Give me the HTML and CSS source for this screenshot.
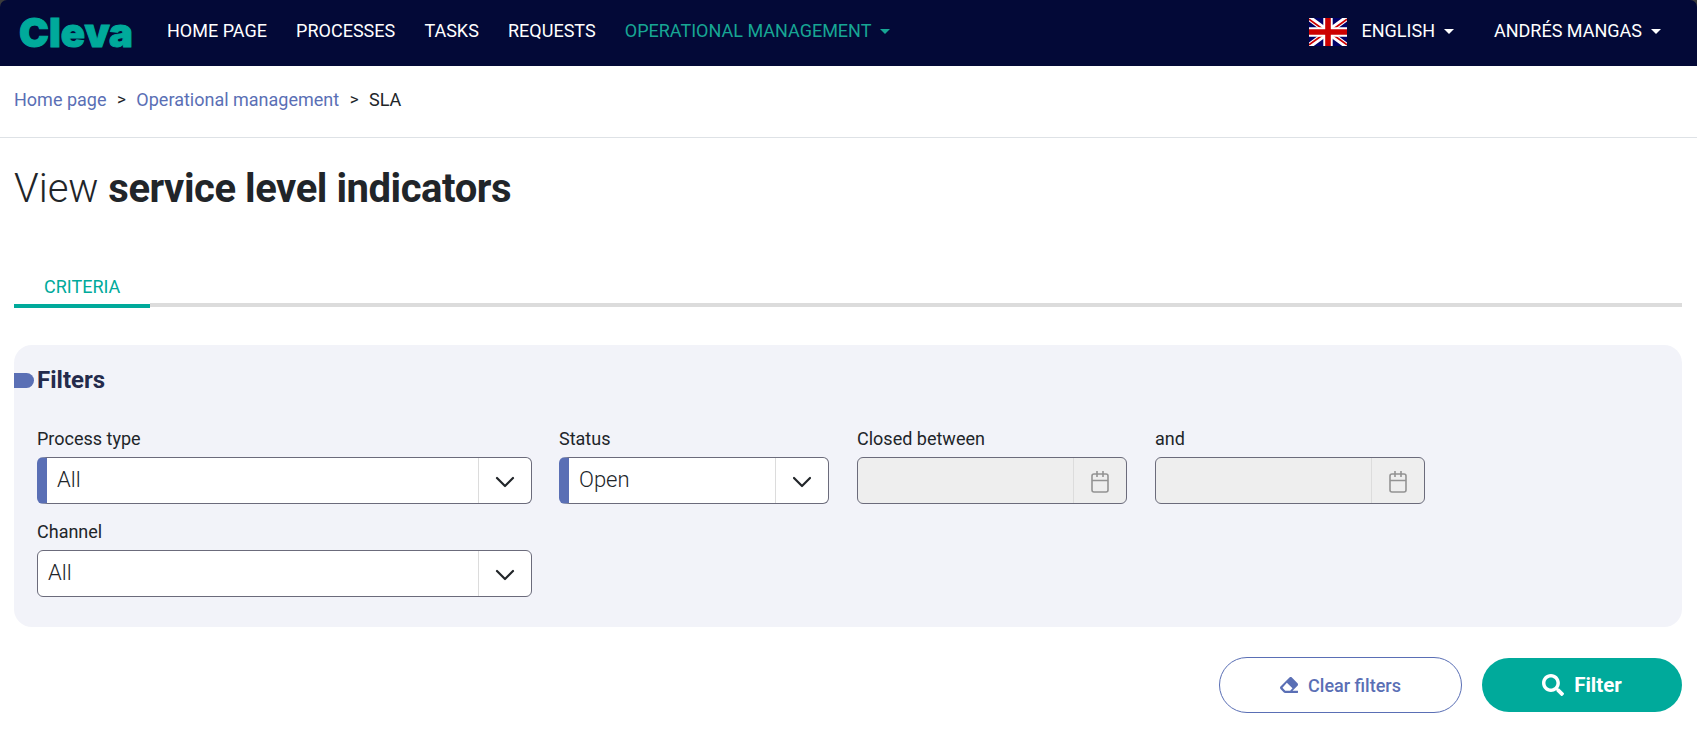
FILE: index.html
```html
<!DOCTYPE html>
<html lang="en">
<head>
<meta charset="utf-8">
<title>Cleva - SLA</title>
<link rel="stylesheet" href="styles.css">
</head>
<body>
<div class="backdrop">
<header class="navbar">
  <svg class="logo" width="113" height="34" viewBox="0 0 113 34" role="img" aria-label="Cleva"><text class="logo-text" x="0" y="31" textLength="114" lengthAdjust="spacingAndGlyphs">Cleva</text></svg>
  <nav class="menu">
    <a class="menu-item">HOME PAGE</a>
    <a class="menu-item">PROCESSES</a>
    <a class="menu-item">TASKS</a>
    <a class="menu-item">REQUESTS</a>
    <a class="menu-item active">OPERATIONAL MANAGEMENT<i class="caret"></i></a>
  </nav>
  <div class="account">
    <svg class="flag" width="38" height="28" viewBox="0 0 38 28">
      <rect width="38" height="28" fill="#006"/>
      <path d="M0 0 38 28M38 0 0 28" stroke="#fff" stroke-width="5.6"/>
      <path d="M0 1.2 15 12M38 26.800 23 16M38 1.200 23 12M0 26.800 15 16" stroke="#c00" stroke-width="1.700"/>
      <path d="M19 0V28M0 14H38" stroke="#fff" stroke-width="9.400"/>
      <path d="M19 0V28M0 14H38" stroke="#c00" stroke-width="5.600"/>
    </svg>
    <a class="menu-item language">ENGLISH<i class="caret"></i></a>
    <a class="menu-item user">ANDRÉS MANGAS<i class="caret"></i></a>
  </div>
</header>
</div>
<div class="breadcrumb"><a>Home page</a><span class="sep">&gt;</span><a>Operational management</a><span class="sep">&gt;</span><span>SLA</span></div>
<main class="page">
  <h1 class="title">View <b>service level indicators</b></h1>
  <div class="tabs"><div class="tab">CRITERIA</div><div class="tab-rest"></div></div>
  <section class="filters">
    <h2 class="filters-title"><i class="marker"></i>Filters</h2>
    <div class="fields">
      <div class="field wide">
        <label>Process type</label>
        <div class="control changed"><span class="value">All</span><span class="addon"><svg width="20" height="12" viewBox="0 0 20 12"><path class="chevron" d="M2 2 10 10 18 2"/></svg></span></div>
      </div>
      <div class="field">
        <label>Status</label>
        <div class="control changed"><span class="value">Open</span><span class="addon"><svg width="20" height="12" viewBox="0 0 20 12"><path class="chevron" d="M2 2 10 10 18 2"/></svg></span></div>
      </div>
      <div class="field">
        <label>Closed between</label>
        <div class="control disabled"><span class="value"></span><span class="addon"><svg class="calendar" width="20" height="24" viewBox="0 0 20 24"><rect x="2" y="4" width="16" height="18" rx="2"/><path d="M2 10.500H18M7 1V7M13 1V7"/></svg></span></div>
      </div>
      <div class="field">
        <label>and</label>
        <div class="control disabled"><span class="value"></span><span class="addon"><svg class="calendar" width="20" height="24" viewBox="0 0 20 24"><rect x="2" y="4" width="16" height="18" rx="2"/><path d="M2 10.500H18M7 1V7M13 1V7"/></svg></span></div>
      </div>
    </div>
    <div class="fields">
      <div class="field wide">
        <label>Channel</label>
        <div class="control"><span class="value">All</span><span class="addon"><svg width="20" height="12" viewBox="0 0 20 12"><path class="chevron" d="M2 2 10 10 18 2"/></svg></span></div>
      </div>
    </div>
  </section>
  <div class="actions">
    <button class="button clear"><svg width="18" height="18" viewBox="0 0 512 512"><path fill="currentColor" d="M497.900 273.900c18.800-18.700 18.800-49.100 0-67.900l-160-160c-18.800-18.700-49.100-18.800-67.900 0l-256 256c-18.700 18.700-18.700 49.100 0 67.900l96 96A48 48 0 0 0 144 480h356c6.600 0 12-5.400 12-12v-40c0-6.600-5.400-12-12-12H355.900zM195.300 188.700 355.300 348.700 288 416H150.600l-80-80z"/></svg>Clear filters</button>
    <button class="button submit"><svg width="22" height="22" viewBox="0 0 512 512"><path fill="currentColor" d="M505 442.700 405.300 343c-4.500-4.500-10.600-7-17-7H372c27.600-35.300 44-79.700 44-128C416 93.100 322.900 0 208 0S0 93.100 0 208s93.100 208 208 208c48.300 0 92.700-16.400 128-44v16.300c0 6.400 2.500 12.500 7 17l99.700 99.700c9.400 9.400 24.600 9.400 33.900 0l28.300-28.300c9.400-9.400 9.400-24.600.1-34zM208 336c-70.700 0-128-57.200-128-128 0-70.700 57.200-128 128-128 70.700 0 128 57.200 128 128 0 70.700-57.200 128-128 128z"/></svg>Filter</button>
  </div>
</main>
</body>
</html>
```
FILE: styles.css
```css
* { box-sizing: border-box; }
body { margin: 0; height: 729px; overflow: hidden; background: #fff; color: #212529; font: 300 18px/27px Roboto, sans-serif; }
.backdrop { background: #3b3b3b; }
.navbar { display: flex; align-items: center; height: 66px; padding: 0 36px 0 19px; background: #030937; border-radius: 7px 7px 0 0; }
.logo { margin-bottom: 1px; overflow: visible; }
.logo-text { font: 900 40px Inter, sans-serif; fill: #00aa9b; stroke: #00aa9b; stroke-width: 1px; }
.menu { display: flex; gap: 29.2px; margin: 0 0 6px 35px; }
.menu-item { display: flex; align-items: center; color: #fff; font-weight: 400; white-space: nowrap; }
.menu-item.active { color: #17a694; }
.caret { margin: 3px 0 0 9px; border: 5px solid transparent; border-top-color: currentColor; border-bottom: 0; }
.account { display: flex; align-items: center; margin: 0 0 6px auto; }
.flag { margin: 4px 15px 0 0; }
.user { margin-left: 40px; }
.breadcrumb { display: flex; height: 72px; padding: 20px 14px 0; border-bottom: 1px solid #dee2e6; font-weight: 400; }
.breadcrumb a { color: #5a6fb5; }
.sep { margin: 0 10.500px; font-size: 17px; }
.page { padding: 0 15px 0 14px; }
.title { margin: 27px 0 0; font-size: 40px; line-height: 48px; font-weight: 350; }
.title b { font-weight: 700; letter-spacing: -.45px; }
.tabs { display: flex; height: 41px; margin-top: 54px; }
.tab { width: 136px; padding-left: 30px; padding-top: 6px; color: #00aa9b; border-bottom: 4px solid #00aa9b; font-weight: 400; }
.tab-rest { flex: 1; height: 40px; border-bottom: 4px solid #dcdcdc; }
.filters { height: 282px; margin-top: 37px; padding-top: 20px; background: #f2f3f9; border-radius: 18px; }
.filters-title { display: flex; align-items: center; gap: 3px; margin: 0 0 28px; font-size: 24px; line-height: 30px; font-weight: 700; color: #242b4c; }
.marker { width: 20px; height: 15px; background: #5a6fb5; border-radius: 0 8px 8px 0; }
.fields { display: flex; gap: 28px; padding-left: 23px; height: 93px; }
.field { width: 270px; }
.field.wide { width: 494.5px; margin-right: -.5px; }
.field label { display: block; height: 34px; padding-top: 2px; font-weight: 400; }
.control { display: flex; height: 47px; background: #fff; border: 1px solid #6b6b7b; border-radius: 6px; overflow: hidden; }
.control.changed { border-left: 10px solid #5a6fb5; }
.control.disabled { background: #eee; }
.value { flex: 1; padding: 8px 0 0 10px; font-size: 22px; font-weight: 350; }
.addon { display: flex; align-items: center; justify-content: center; width: 53px; padding-top: 2px; border-left: 1px solid #dcdcdc; }
.chevron { fill: none; stroke: #212529; stroke-width: 2.200; stroke-linecap: round; stroke-linejoin: round; }
.calendar { fill: none; stroke: #939393; stroke-width: 1.600; }
.actions { display: flex; justify-content: flex-end; align-items: center; gap: 20px; margin-top: 30px; }
.button { display: flex; align-items: center; justify-content: center; border-radius: 30px; font-family: Roboto, sans-serif; }
.clear { gap: 10px; width: 243px; height: 56px; background: #fff; color: #5a6fb5; border: 1px solid #5a6fb5; font-size: 18px; font-weight: 500; }
.submit { gap: 10px; width: 200px; height: 54px; background: #00aa9b; color: #fff; border: 0; font-size: 20.500px; font-weight: 700; }
```
